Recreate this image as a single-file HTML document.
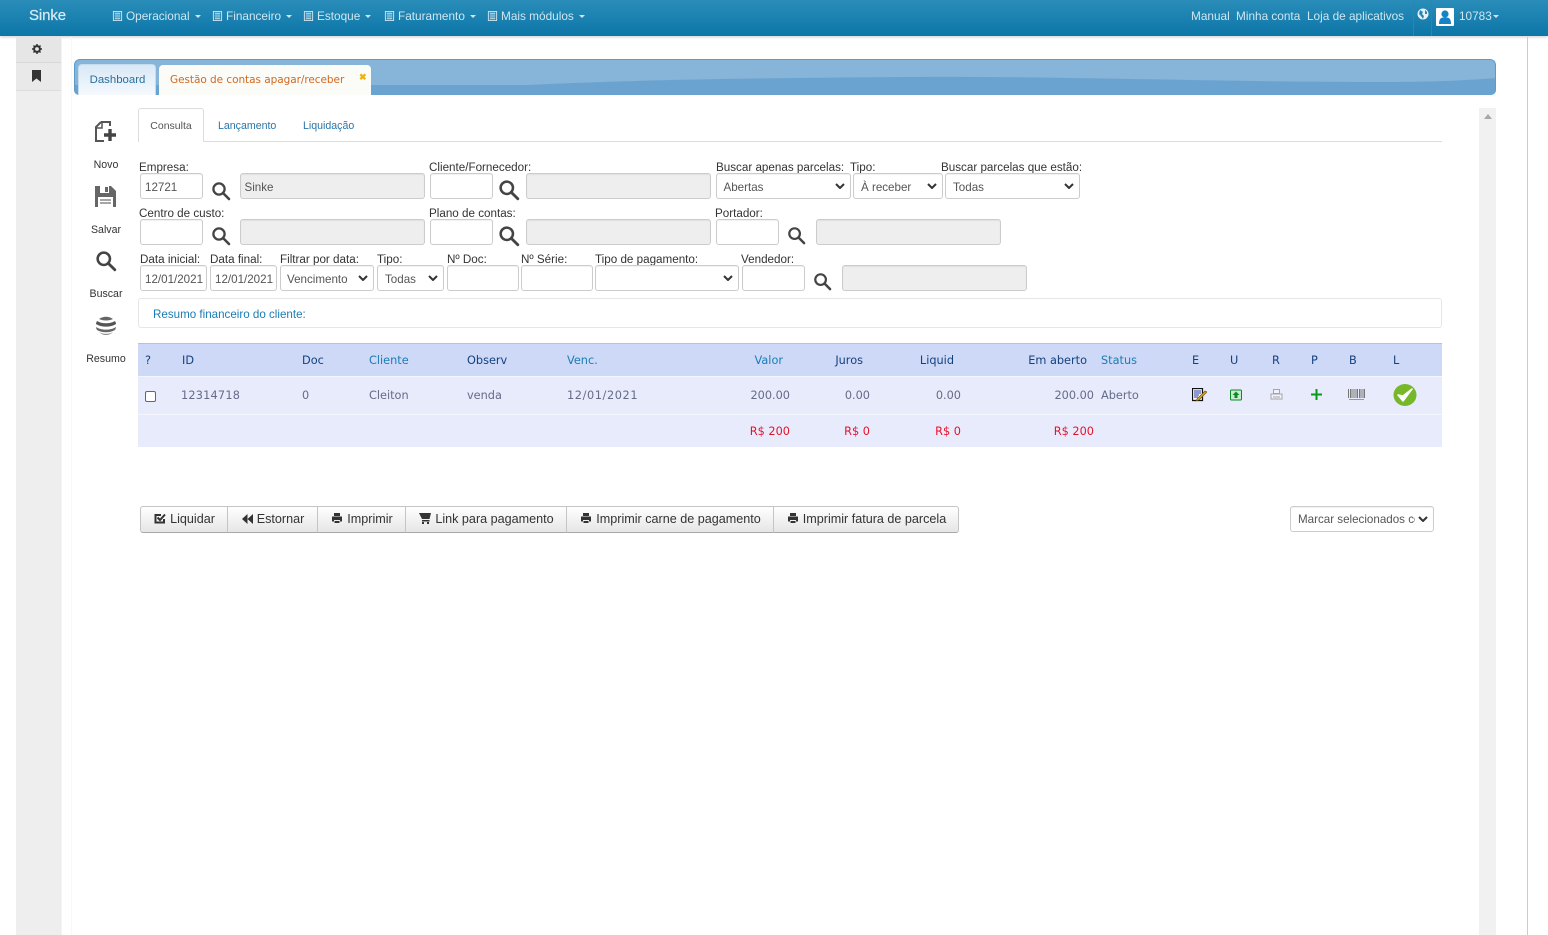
<!DOCTYPE html>
<html lang="pt-BR">
<head>
<meta charset="utf-8">
<title>Sinke</title>
<style>
html,body{margin:0;padding:0;width:1548px;height:935px;overflow:hidden;background:#fff;font-family:"Liberation Sans",sans-serif;font-size:12px;color:#333}
*{box-sizing:border-box}
.a{position:absolute;white-space:nowrap}
#nav{left:0;top:0;width:1548px;height:36px;background:linear-gradient(#2a8db9,#0c76a8);box-shadow:0 1px 3px rgba(0,0,0,.2)}
.n{top:9px;font-size:11.8px;line-height:14px;color:#cfe6f0}
.n svg{vertical-align:-2px;margin-right:3px}
.car{display:inline-block;width:0;height:0;border-left:3.5px solid transparent;border-right:3.5px solid transparent;border-top:3.5px solid #cfe6f0;vertical-align:2px;margin-left:5px}
.l{font-size:11.65px;line-height:16px;color:#333}
.f{height:26px;border:1px solid #ccc;border-radius:3px;background:#fff;box-shadow:inset 0 1px 1px rgba(0,0,0,.06);font-size:11.6px;line-height:27px;color:#555;padding-left:3.5px}
.d{background:#eee;border-color:#ccc}
.s svg{position:absolute;right:5px;top:9px}
.sb{font-size:10.6px;line-height:12px;color:#333;text-align:center;width:60px;left:76px}
.h{top:353px;font-family:"DejaVu Sans",sans-serif;font-size:11.3px;line-height:15px;color:#14407e}
.hb{color:#1a7db5}
.c{top:388px;font-family:"DejaVu Sans",sans-serif;font-size:11.3px;line-height:15px;color:#666b88}
.r{text-align:right}
.t{top:424px;font-family:"DejaVu Sans",sans-serif;font-size:11.3px;line-height:15px;color:#e8122c;text-align:right}
.b{top:506px;height:27px;background:linear-gradient(#fff,#e6e6e6);border:1px solid #c4c4c4;border-bottom-color:#a8a8a8;font-size:12.6px;line-height:25px;color:#333;text-align:center;border-right:0;padding-left:1px}
.b svg{vertical-align:-1px;margin-right:4px}
</style>
</head>
<body>
<svg width="0" height="0" style="position:absolute">
<defs>
<symbol id="mag" viewBox="0 0 20 20"><circle cx="8" cy="8" r="5.6" fill="none" stroke="#444" stroke-width="2.3"/><path d="M12 12l6 6" stroke="#444" stroke-width="2.6" stroke-linecap="round"/></symbol>
<symbol id="doc" viewBox="0 0 12 12"><path d="M1.5 1h9v10h-9z" fill="none" stroke="#cfe6f0"/><path d="M3 3h6M3 5h6M3 7h6M3 9h6" stroke="#cfe6f0"/></symbol>
<symbol id="chev" viewBox="0 0 10 6"><path d="M1 1l4 4 4-4" fill="none" stroke="#333" stroke-width="2"/></symbol>
<symbol id="prn" viewBox="0 0 12 12"><path d="M3 1h6v3H3zM1 4.500h10v5H9V8H3v1.500H1zM3.500 9h5v2h-5z" fill="#333"/></symbol>
</defs>
</svg>

<div class="a" id="nav"></div>
<div class="a" style="left:29px;top:6px;font-size:15px;line-height:19px;color:#d6ecf5;font-weight:500;letter-spacing:-.1px;-webkit-text-stroke:.2px #d6ecf5">Sinke</div>
<div class="a n" style="left:112px"><svg width="11" height="12"><use href="#doc"/></svg>Operacional<span class="car"></span></div>
<div class="a n" style="left:212px"><svg width="11" height="12"><use href="#doc"/></svg>Financeiro<span class="car"></span></div>
<div class="a n" style="left:303px"><svg width="11" height="12"><use href="#doc"/></svg>Estoque<span class="car"></span></div>
<div class="a n" style="left:384px"><svg width="11" height="12"><use href="#doc"/></svg>Faturamento<span class="car"></span></div>
<div class="a n" style="left:487px"><svg width="11" height="12"><use href="#doc"/></svg>Mais módulos<span class="car"></span></div>
<div class="a n" style="left:1191px">Manual</div>
<div class="a n" style="left:1236px">Minha conta</div>
<div class="a n" style="left:1307px">Loja de aplicativos</div>
<div class="a" style="left:1413px;top:0;width:1px;height:36px;background:#2a86b0"></div>
<div class="a" style="left:1431px;top:0;width:1px;height:36px;background:#2a86b0"></div>
<svg class="a" style="left:1417px;top:8px" width="12" height="12" viewBox="0 0 12 12"><circle cx="6" cy="6" r="5.500" fill="#e4f1f7"/><path d="M3 2l3 2-1 2 2 2-1 3-2-3-2-2zM8 2l2 2v2H8z" fill="#2a86b0"/></svg>
<div class="a" style="left:1436px;top:8px;width:18px;height:18px;background:#fff;border-radius:1px"></div>
<svg class="a" style="left:1436px;top:8px" width="18" height="18" viewBox="0 0 18 18"><circle cx="9" cy="6" r="3.600" fill="#1584c4"/><path d="M3 16c0-5 2-6.500 4-6.500h4c2 0 4 1.500 4 6.500z" fill="#1584c4"/></svg>
<div class="a n" style="left:1459px">10783<span class="car" style="margin-left:1px"></span></div>

<div class="a" style="left:16px;top:37px;width:45px;height:898px;background:#eee"></div>
<div class="a" style="left:16px;top:37px;width:45px;height:25px;background:#e6e6e6"></div>
<div class="a" style="left:16px;top:63px;width:45px;height:27px;background:#e9e9e9"></div>
<div class="a" style="left:16px;top:62px;width:45px;height:1px;background:#d8d8d8"></div>
<div class="a" style="left:16px;top:90px;width:45px;height:1px;background:#ddd"></div>
<div class="a" style="left:61px;top:37px;width:1px;height:898px;background:#f3f3f3"></div>
<div class="a" style="left:71px;top:37px;width:1px;height:898px;background:#f8f8f8"></div>
<svg class="a" style="left:32px;top:44px" width="10" height="10" viewBox="0 0 11 11"><circle cx="5.500" cy="5.500" r="3.200" fill="none" stroke="#333" stroke-width="2.200"/><path d="M5.500 0v2M5.500 9v2M0 5.500h2M9 5.500h2M1.600 1.600l1.400 1.400M8 8l1.400 1.400M1.600 9.400L3 8M8 3l1.400-1.400" stroke="#333" stroke-width="1.600"/></svg>
<svg class="a" style="left:32px;top:70px" width="9" height="12" viewBox="0 0 9 12"><path d="M0 0h9v12L4.500 8.500 0 12z" fill="#333"/></svg>
<div class="a" style="left:1527px;top:37px;width:1px;height:898px;background:#ccc"></div>

<div class="a" style="left:74px;top:59px;width:1422px;height:36px;border:1px solid #5b9bc8;border-bottom:0;border-radius:6px 6px 5px 5px;background:#6ba3d0;overflow:hidden">
<svg width="1422" height="36" style="position:absolute;left:0;top:0"><path d="M0 0h1422v18c-40 3-70 4-110 4-180 0-320-6-480-5-150 1-280 3-380 8H0z" fill="#87b4d9"/></svg>
</div>
<div class="a" style="left:78px;top:64px;width:78px;height:31px;background:linear-gradient(#d8e8f6,#f5f9fd);border:1px solid #c5dcec;border-bottom:0;border-radius:4px 4px 0 0;color:#2a6f9e;text-align:center;line-height:30px;font-size:11.4px;padding-left:1px">Dashboard</div>
<div class="a" style="left:159px;top:65px;width:212px;height:30px;background:#fbfbf8;border-radius:4px 4px 0 0;color:#d2691e;font-family:'DejaVu Sans',sans-serif;font-size:10.500px;line-height:28px;padding:1px 0 0 11px;letter-spacing:-.05px">Gestão de contas apagar/receber</div>
<div class="a" style="left:359px;top:71px;color:#f0b400;font-size:9px;line-height:12px;font-weight:bold">✖</div>

<div class="a" style="left:1479px;top:108px;width:17px;height:827px;background:#f1f1f1"></div>
<div class="a" style="left:1484px;top:114px;width:0;height:0;border-left:4px solid transparent;border-right:4px solid transparent;border-bottom:5px solid #a8a8a8"></div>

<div class="a" style="left:138px;top:141px;width:1304px;height:1px;background:#ddd"></div>
<div class="a" style="left:138px;top:108px;width:66px;height:34px;background:#fff;border:1px solid #ddd;border-bottom:0;border-radius:3px 3px 0 0;text-align:center;line-height:34px;font-size:10.500px;color:#555">Consulta</div>
<div class="a" style="left:218px;top:120px;font-size:10.600px;line-height:13px;color:#2a76a8">Lançamento</div>
<div class="a" style="left:303px;top:120px;font-size:10.600px;line-height:13px;color:#2a76a8">Liquidação</div>

<svg class="a" style="left:94px;top:120px" width="24" height="23" viewBox="0 0 24 23"><path d="M7 2h9v4M7 2L2 7v14h8" fill="none" stroke="#555" stroke-width="2"/><path d="M3 8h5V3" fill="none" stroke="#555" stroke-width="1.500"/><path d="M16 9v12M10 15h12" stroke="#444" stroke-width="3.400"/></svg>
<div class="a sb" style="top:159px">Novo</div>
<svg class="a" style="left:95px;top:186px" width="21" height="21" viewBox="0 0 21 21"><path d="M0 0h16l5 5v16H0z" fill="#666"/><path d="M5 0h9v7H5z" fill="#fff"/><path d="M10 1h3v5h-3z" fill="#666"/><path d="M3 11h15v10H3z" fill="#fff"/><path d="M5 14h11M5 17h11" stroke="#888" stroke-width="1.500"/></svg>
<div class="a sb" style="top:224px">Salvar</div>
<svg class="a" style="left:95px;top:250px" width="22" height="22"><use href="#mag"/></svg>
<div class="a sb" style="top:288px">Buscar</div>
<svg class="a" style="left:95px;top:316px" width="22" height="20" viewBox="0 0 22 20"><path d="M4 3c4-3 10-3 14 0-4 2-10 2-14 0z" fill="#666"/><path d="M1 8c0-1 .5-2 1-3 5 3 13 3 18 0 .5 1 1 2 1 3-5 3.500-15 3.500-20 0z" fill="#555"/><path d="M1 11c5 3.500 15 3.500 20 0 0 1-.5 2-1 3-5 3-13 3-18 0-.5-1-1-2-1-3z" fill="#666"/><path d="M4 16c4 2.500 10 2.500 14 0-4 4-10 4-14 0z" fill="#888"/></svg>
<div class="a sb" style="top:353px">Resumo</div>

<div class="a l" style="left:139px;top:160px">Empresa:</div>
<div class="a l" style="left:429px;top:160px">Cliente/Fornecedor:</div>
<div class="a l" style="left:716px;top:160px">Buscar apenas parcelas:</div>
<div class="a l" style="left:850px;top:160px">Tipo:</div>
<div class="a l" style="left:941px;top:160px">Buscar parcelas que estão:</div>
<div class="a f" style="left:140px;top:173px;width:63px;padding-left:4px">12721</div>
<svg class="a" style="left:211px;top:181px" width="20" height="20"><use href="#mag"/></svg>
<div class="a f d" style="left:240px;top:173px;width:185px">Sinke</div>
<div class="a f" style="left:430px;top:173px;width:63px"></div>
<svg class="a" style="left:498px;top:179px" width="22" height="22"><use href="#mag"/></svg>
<div class="a f d" style="left:526px;top:173px;width:185px"></div>
<div class="a f s" style="left:716px;top:173px;width:135px;padding-left:6.5px">Abertas<svg width="10" height="6"><use href="#chev"/></svg></div>
<div class="a f s" style="left:853px;top:173px;width:90px;padding-left:7px">À receber<svg width="10" height="6"><use href="#chev"/></svg></div>
<div class="a f s" style="left:945px;top:173px;width:135px;padding-left:7px">Todas<svg width="10" height="6"><use href="#chev"/></svg></div>

<div class="a l" style="left:139px;top:206px">Centro de custo:</div>
<div class="a l" style="left:429px;top:206px">Plano de contas:</div>
<div class="a l" style="left:715px;top:206px">Portador:</div>
<div class="a f" style="left:140px;top:219px;width:63px"></div>
<svg class="a" style="left:211px;top:226px" width="20" height="20"><use href="#mag"/></svg>
<div class="a f d" style="left:240px;top:219px;width:185px"></div>
<div class="a f" style="left:430px;top:219px;width:63px"></div>
<svg class="a" style="left:498px;top:225px" width="22" height="22"><use href="#mag"/></svg>
<div class="a f d" style="left:526px;top:219px;width:185px"></div>
<div class="a f" style="left:716px;top:219px;width:63px"></div>
<svg class="a" style="left:787px;top:226px" width="19" height="19"><use href="#mag"/></svg>
<div class="a f d" style="left:816px;top:219px;width:185px"></div>

<div class="a l" style="left:140px;top:252px">Data inicial:</div>
<div class="a l" style="left:210px;top:252px">Data final:</div>
<div class="a l" style="left:280px;top:252px">Filtrar por data:</div>
<div class="a l" style="left:377px;top:252px">Tipo:</div>
<div class="a l" style="left:447px;top:252px">Nº Doc:</div>
<div class="a l" style="left:521px;top:252px">Nº Série:</div>
<div class="a l" style="left:595px;top:252px">Tipo de pagamento:</div>
<div class="a l" style="left:741px;top:252px">Vendedor:</div>
<div class="a f" style="left:140px;top:265px;width:67px;padding-left:4px">12/01/2021</div>
<div class="a f" style="left:210px;top:265px;width:67px;padding-left:4px">12/01/2021</div>
<div class="a f s" style="left:280px;top:265px;width:94px;padding-left:6px">Vencimento<svg width="10" height="6"><use href="#chev"/></svg></div>
<div class="a f s" style="left:377px;top:265px;width:67px;padding-left:7px">Todas<svg width="10" height="6"><use href="#chev"/></svg></div>
<div class="a f" style="left:447px;top:265px;width:72px"></div>
<div class="a f" style="left:521px;top:265px;width:72px"></div>
<div class="a f s" style="left:595px;top:265px;width:144px"><svg width="10" height="6"><use href="#chev"/></svg></div>
<div class="a f" style="left:742px;top:265px;width:63px"></div>
<svg class="a" style="left:813px;top:272px" width="19" height="19"><use href="#mag"/></svg>
<div class="a f d" style="left:842px;top:265px;width:185px"></div>

<div class="a" style="left:138px;top:298px;width:1304px;height:30px;border:1px solid #e6e6e6;border-radius:3px;line-height:31px;padding-left:14px;color:#1a7db5;font-size:11.6px">Resumo financeiro do cliente:</div>

<div class="a" style="left:138px;top:343px;width:1304px;height:33px;background:#cdd9f7;border-top:1px solid #b5c2dc"></div>
<div class="a" style="left:138px;top:376px;width:1304px;height:71px;background:#e7ebfb"></div>
<div class="a" style="left:138px;top:376px;width:1304px;height:1px;background:#f4f6fe"></div>
<div class="a" style="left:138px;top:414px;width:1304px;height:1px;background:#f4f6fe"></div>

<div class="a h" style="left:145px">?</div>
<div class="a h" style="left:182px">ID</div>
<div class="a h" style="left:302px">Doc</div>
<div class="a h hb" style="left:369px">Cliente</div>
<div class="a h" style="left:467px">Observ</div>
<div class="a h hb" style="left:567px">Venc.</div>
<div class="a h hb r" style="left:703px;width:80px">Valor</div>
<div class="a h r" style="left:803px;width:60px">Juros</div>
<div class="a h r" style="left:894px;width:60px">Liquid</div>
<div class="a h r" style="left:1007px;width:80px">Em aberto</div>
<div class="a h hb" style="left:1101px">Status</div>
<div class="a h" style="left:1192px">E</div>
<div class="a h" style="left:1230px">U</div>
<div class="a h" style="left:1272px">R</div>
<div class="a h" style="left:1311px">P</div>
<div class="a h" style="left:1349px">B</div>
<div class="a h" style="left:1393px">L</div>

<div class="a" style="left:145px;top:391px;width:11px;height:11px;border:1px solid #666;border-radius:2px;background:#fff"></div>
<div class="a c" style="left:181px;letter-spacing:.2px">12314718</div>
<div class="a c" style="left:302px">0</div>
<div class="a c" style="left:369px">Cleiton</div>
<div class="a c" style="left:467px">venda</div>
<div class="a c" style="left:567px;letter-spacing:.6px">12/01/2021</div>
<div class="a c r" style="left:710px;width:80px">200.00</div>
<div class="a c r" style="left:810px;width:60px">0.00</div>
<div class="a c r" style="left:901px;width:60px">0.00</div>
<div class="a c r" style="left:1014px;width:80px">200.00</div>
<div class="a c" style="left:1101px">Aberto</div>

<svg class="a" style="left:1192px;top:388px" width="15" height="14" viewBox="0 0 15 14"><path d="M.5.500h10v12H.5z" fill="#f4f6fe" stroke="#111" stroke-width="1.200"/><path d="M2 3h7M2 5h7M2 7h5M2 9h4" stroke="#2a3f98" stroke-width="1.100"/><path d="M5 11l8-8 2 1-8 8-3 1z" fill="#d9a520" stroke="#5a4a10" stroke-width=".6"/></svg>
<svg class="a" style="left:1230px;top:389px" width="12" height="12" viewBox="0 0 12 12"><rect x=".5" y="1" width="11" height="10" rx="1" fill="#c8eccd" stroke="#0c8a2a"/><path d="M6 2.500L9.500 6H7.500v3h-3V6H2.500z" fill="#0c8a2a"/></svg>
<svg class="a" style="left:1270px;top:389px" width="13" height="12" viewBox="0 0 13 12"><path d="M3.500.5h6v4h-6zM1 5h11v5H1z" fill="#f2f3fa" stroke="#a4a4ac"/><path d="M3 8h7" stroke="#a4a4ac"/></svg>
<svg class="a" style="left:1311px;top:389px" width="11" height="11" viewBox="0 0 11 11"><path d="M5.500 0v11M0 5.500h11" stroke="#0a9a1a" stroke-width="2"/></svg>
<svg class="a" style="left:1348px;top:389px" width="17" height="12" viewBox="0 0 17 12"><path d="M.5 0v9M2.500 0v9M4 0v9M6 0v9M8 0v9M9.500 0v9M11.500 0v9M13 0v9M15 0v9M16.500 0v9" stroke="#777"/><path d="M1 10.500h15" stroke="#999"/></svg>
<svg class="a" style="left:1393px;top:384px" width="24" height="22" viewBox="0 0 24 22"><ellipse cx="12" cy="11" rx="11.500" ry="11" fill="#76b82a"/><path d="M5 11l5 6 9-12-9 7z" fill="#fff" stroke="#fff" stroke-width="1.500" stroke-linejoin="round"/></svg>

<div class="a t" style="left:710px;width:80px">R$ 200</div>
<div class="a t" style="left:810px;width:60px">R$ 0</div>
<div class="a t" style="left:901px;width:60px">R$ 0</div>
<div class="a t" style="left:1014px;width:80px">R$ 200</div>

<div class="a b" style="left:140px;width:87px;border-radius:3px 0 0 3px"><svg width="12" height="11" viewBox="0 0 12 11"><path d="M10 6v3.500H1.500V2H7" fill="none" stroke="#333" stroke-width="2"/><path d="M3.500 4.500L6 7l5-5.500" fill="none" stroke="#333" stroke-width="2"/></svg>Liquidar</div>
<div class="a b" style="left:227px;width:90px"><svg width="11" height="10" viewBox="0 0 11 10"><path d="M5.500 0v10L0 5zM11 0v10L5.500 5z" fill="#333"/></svg>Estornar</div>
<div class="a b" style="left:317px;width:88px"><svg width="12" height="12"><use href="#prn"/></svg>Imprimir</div>
<div class="a b" style="left:405px;width:161px"><svg width="12" height="12" viewBox="0 0 12 12"><path d="M0 1l12 0-1.500 6H3zM3 8h7.500v1.500H3zM3 10h2v2H3zM8 10h2v2H8z" fill="#333"/></svg>Link para pagamento</div>
<div class="a b" style="left:566px;width:207px"><svg width="12" height="12"><use href="#prn"/></svg>Imprimir carne de pagamento</div>
<div class="a b" style="left:773px;width:186px;border-right:1px solid #c4c4c4;border-radius:0 3px 3px 0"><svg width="12" height="12"><use href="#prn"/></svg>Imprimir fatura de parcela</div>

<div class="a f s" style="left:1290px;top:506px;width:144px;padding-left:7px;overflow:hidden;line-height:25px"><span style="display:block;width:117px;overflow:hidden">Marcar selecionados como</span><svg width="10" height="6"><use href="#chev"/></svg></div>
</body>
</html>
